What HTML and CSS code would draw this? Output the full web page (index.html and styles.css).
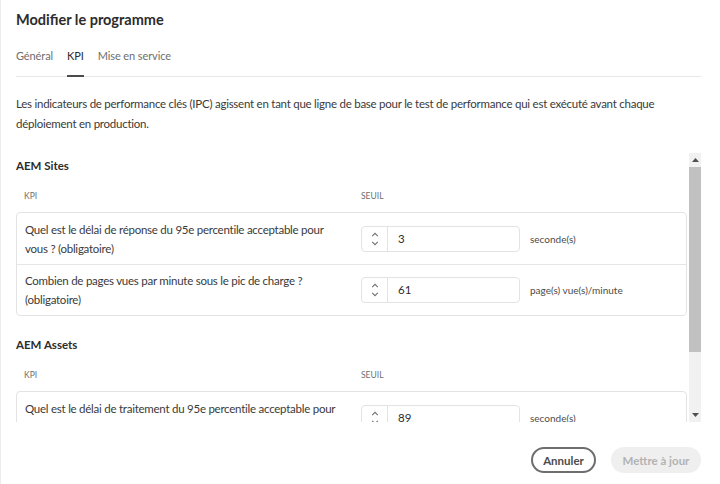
FILE: index.html
```html
<!DOCTYPE html>
<html lang="fr">
<head>
<meta charset="utf-8">
<title>Modifier le programme</title>
<link rel="stylesheet" href="styles.css">
</head>
<body>
<div class="dialog">
  <header class="dialog-header">
    <h1 class="dialog-title">Modifier le programme</h1>
    <nav class="tabs">
      <span class="tab">Général</span>
      <span class="tab is-selected">KPI</span>
      <span class="tab">Mise en service</span>
    </nav>
  </header>

  <p class="intro">Les indicateurs de performance clés (IPC) agissent en tant que ligne de base pour le test de performance qui est exécuté avant chaque déploiement en production.</p>

  <div class="scroll-area">
    <div class="scroll">
      <section class="group">
        <h2 class="group-title">AEM Sites</h2>
        <div class="cols-head"><span class="col-kpi">KPI</span><span class="col-seuil">Seuil</span></div>
        <div class="card">
          <div class="row">
            <div class="question">Quel est le délai de réponse du 95e percentile acceptable pour vous ? (obligatoire)</div>
            <div class="threshold">
              <div class="stepper">
                <span class="step-btns"><svg width="8" height="16" viewBox="0 0 8 16"><path d="M1.2 5.2 4 2.4 6.8 5.2M1.2 10.8 4 13.6 6.8 10.8" fill="none" stroke="#707070" stroke-width="1.1"/></svg></span>
                <span class="step-value">3</span>
              </div>
              <span class="unit">seconde(s)</span>
            </div>
          </div>
          <div class="row">
            <div class="question">Combien de pages vues par minute sous le pic de charge ? (obligatoire)</div>
            <div class="threshold">
              <div class="stepper">
                <span class="step-btns"><svg width="8" height="16" viewBox="0 0 8 16"><path d="M1.2 5.2 4 2.4 6.8 5.2M1.2 10.8 4 13.6 6.8 10.8" fill="none" stroke="#707070" stroke-width="1.1"/></svg></span>
                <span class="step-value">61</span>
              </div>
              <span class="unit">page(s) vue(s)/minute</span>
            </div>
          </div>
        </div>
      </section>

      <section class="group">
        <h2 class="group-title">AEM Assets</h2>
        <div class="cols-head"><span class="col-kpi">KPI</span><span class="col-seuil">Seuil</span></div>
        <div class="card">
          <div class="row">
            <div class="question">Quel est le délai de traitement du 95e percentile acceptable pour vous ? (obligatoire)</div>
            <div class="threshold">
              <div class="stepper">
                <span class="step-btns"><svg width="8" height="16" viewBox="0 0 8 16"><path d="M1.2 5.2 4 2.4 6.8 5.2M1.2 10.8 4 13.6 6.8 10.8" fill="none" stroke="#707070" stroke-width="1.1"/></svg></span>
                <span class="step-value">89</span>
              </div>
              <span class="unit">seconde(s)</span>
            </div>
          </div>
        </div>
      </section>
    </div>

    <div class="scrollbar" aria-hidden="true">
      <span class="sb-btn"><svg width="7" height="4" viewBox="0 0 7 4"><path d="M0 4h7L3.5 0z" fill="#505050"/></svg></span>
      <span class="sb-thumb"></span>
      <span class="sb-track"></span>
      <span class="sb-btn"><svg width="7" height="4" viewBox="0 0 7 4"><path d="M0 0h7L3.5 4z" fill="#505050"/></svg></span>
    </div>
  </div>

  <footer class="dialog-footer">
    <button class="btn btn-secondary" type="button">Annuler</button>
    <button class="btn btn-primary" type="button" disabled>Mettre à jour</button>
  </footer>
</div>
</body>
</html>
```

FILE: styles.css
```css
* { box-sizing: border-box; }

html, body {
  margin: 0;
  padding: 0;
  background: #ffffff;
}

body {
  font-family: Lato, "Open Sans", sans-serif;
  color: #3a3a3a;
  width: 720px;
  height: 484px;
  overflow: hidden;
}

.dialog {
  height: 484px;
  border-left: 1px solid #ececec;
  padding: 0 19px 0 15px;
  display: flex;
  flex-direction: column;
}

.dialog-title {
  margin: 10px 0 0;
  font-size: 14.5px;
  line-height: 20px;
  font-weight: 700;
  color: #2c2c2c;
}

.tabs {
  margin-top: 10px;
  display: flex;
  gap: 14px;
  border-bottom: 1px solid #e8e8e8;
  height: 37px;
}

.tab {
  position: relative;
  font-size: 11px;
  letter-spacing: -0.1px;
  line-height: 16px;
  padding-top: 8px;
  color: #6e6e6e;
}

.tab.is-selected { color: #2c2c2c; }

.tab.is-selected::after {
  content: "";
  position: absolute;
  left: 0;
  right: 0;
  bottom: -1px;
  height: 2px;
  background: #4b4b4b;
}

.intro {
  margin: 17px 0 0;
  font-size: 11.5px;
  line-height: 20px;
  letter-spacing: -0.25px;
  max-width: 640px;
  color: #3a3a3a;
}

.scroll-area {
  margin-top: 19px;
  height: 269px;
  display: flex;
}

.scroll {
  flex: 1;
  overflow: hidden;
}

.scrollbar {
  width: 12px;
  margin-left: 2px;
  background: #f1f1f1;
  display: flex;
  flex-direction: column;
}

.sb-btn {
  height: 14px;
  display: flex;
  align-items: center;
  justify-content: center;
}

.sb-btn svg { display: block; }

.sb-thumb {
  height: 185px;
  background: #c1c1c1;
}

.sb-track { flex: 1; }

.group { padding-top: 5px; }
.group + .group { padding-top: 21px; }

.group-title {
  margin: 0;
  font-size: 11.5px;
  line-height: 16px;
  font-weight: 700;
  color: #2c2c2c;
}

.cols-head {
  display: flex;
  padding: 16px 0 10px 8px;
  font-size: 8.5px;
  line-height: 12px;
  text-transform: uppercase;
  color: #6e6e6e;
}

.col-kpi { width: 337px; }

.card {
  border: 1px solid #e3e3e3;
  border-radius: 4px;
}

.row {
  display: flex;
  align-items: center;
  min-height: 51px;
  padding: 6px 8px 6px 8px;
}

.row + .row { border-top: 1px solid #e6e6e6; }

.question {
  width: 336px;
  padding-right: 14px;
  font-size: 11.5px;
  letter-spacing: -0.25px;
  line-height: 19px;
  color: #3a3a3a;
}

.threshold {
  display: flex;
  align-items: center;
  gap: 10px;
}

.stepper {
  display: flex;
  width: 159px;
  height: 26px;
  border: 1px solid #e3e3e3;
  border-radius: 4px;
}

.step-btns {
  width: 26px;
  display: flex;
  align-items: center;
  justify-content: center;
  border-right: 1px solid #e3e3e3;
}

.step-btns svg { display: block; }

.step-value {
  padding-left: 10px;
  font-size: 11.5px;
  line-height: 24px;
  color: #2c2c2c;
}

.unit {
  font-size: 10px;
  color: #4b4b4b;
}

.dialog-footer {
  margin-top: 25px;
  display: flex;
  justify-content: flex-end;
  gap: 15px;
}

.btn {
  font-family: inherit;
  height: 26px;
  border-radius: 13px;
  font-size: 11.5px;
  font-weight: 700;
  padding: 0;
  white-space: nowrap;
}

.btn-secondary {
  width: 65px;
  border: 2px solid #6e6e6e;
  background: #ffffff;
  color: #4b4b4b;
}

.btn-primary {
  width: 90px;
  border: none;
  background: #efefef;
  color: #b3b3b3;
}
```
